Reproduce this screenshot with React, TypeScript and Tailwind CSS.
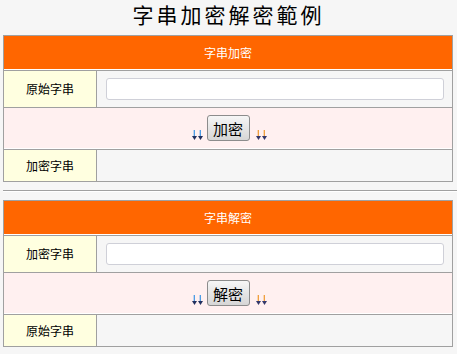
import React, { useState } from 'react';

const font = { fontFamily: '"Noto Sans CJK TC", "Noto Sans", sans-serif' };

function Arrows({ stem, head }: { stem: string; head: string }) {
  return (
    <svg width="11" height="10" viewBox="0 0 11 10" className="block">
      {[0, 6].map((x) => (
        <g key={x}>
          <rect x={x + 2} y={0} width={1} height={7} fill={stem} />
          <rect x={x + 1} y={0} width={1} height={6} fill={stem} opacity={0.35} />
          <polygon points={`${x},6 ${x + 5},6 ${x + 2.5},10`} fill={head} />
        </g>
      ))}
    </svg>
  );
}

function CipherTable({
  title,
  inLabel,
  outLabel,
  action,
  value,
  setValue,
  result,
  onRun,
}: {
  title: string;
  inLabel: string;
  outLabel: string;
  action: string;
  value: string;
  setValue: (v: string) => void;
  result: string;
  onRun: () => void;
}) {
  return (
    <div className="ml-[3px] w-[450px] border border-[#a0a0a0] bg-[#f6f6f6]">
      <div className="h-[34px] bg-[#ff6600] border-b border-white flex items-center justify-center text-white text-[12px]">
        {title}
      </div>

      <div className="flex h-[37px] border-t border-[#a0a0a0]">
        <div className="w-[93px] bg-[#ffffe0] border-r border-[#a0a0a0] flex items-center justify-center text-[12px] text-black">
          {inLabel}
        </div>
        <div className="flex-1 flex items-center pl-[9px] pr-[8px]">
          <input
            type="text"
            value={value}
            onChange={(e) => setValue(e.target.value)}
            className="w-full h-[22px] bg-white border border-[#cfd0d8] rounded-[3px] px-1 text-[12px] outline-none"
          />
        </div>
      </div>

      <div className="h-[42px] border-t border-[#a0a0a0] bg-[#fff0f0] border-b border-b-white flex items-start justify-center pt-[7px] pl-[2px]">
        <div className="flex items-end">
          <div className="mb-[1px] mr-[4px]">
            <Arrows stem="#4d9de6" head="#22305e" />
          </div>
          <button
            type="button"
            onClick={onRun}
            className="h-[26px] w-[43px] rounded-[3px] border border-[#8c8c8c] bg-gradient-to-b from-[#f6f6f6] to-[#d6d6d6] text-[15px] leading-none text-black flex items-center justify-center"
          >
            {action}
          </button>
          <div className="mb-[1px] ml-[6px]">
            <Arrows stem="#f0a040" head="#34386a" />
          </div>
        </div>
      </div>

      <div className="flex h-[32px] border-t border-[#a0a0a0]">
        <div className="w-[93px] bg-[#ffffe0] border-r border-[#a0a0a0] flex items-center justify-center text-[12px] text-black">
          {outLabel}
        </div>
        <div className="flex-1 flex items-center px-2 text-[12px] break-all">{result}</div>
      </div>
    </div>
  );
}

export default function App() {
  const [plain, setPlain] = useState('');
  const [encoded, setEncoded] = useState('');
  const [cipher, setCipher] = useState('');
  const [decoded, setDecoded] = useState('');

  return (
    <div className="w-[457px] h-[354px] bg-[#f6f6f6] overflow-hidden" style={font}>
      <div className="h-[35px] flex justify-center">
        <h1 className="text-[21px] leading-[28px] tracking-[3px] text-black font-normal">字串加密解密範例</h1>
      </div>

      <CipherTable
        title="字串加密"
        inLabel="原始字串"
        outLabel="加密字串"
        action="加密"
        value={plain}
        setValue={setPlain}
        result={encoded}
        onRun={() => setEncoded(btoa(unescape(encodeURIComponent(plain))))}
      />

      <div className="ml-[3px] mt-[8px] mb-[8px] border-t border-[#a0a0a0] border-b border-b-white" />

      <CipherTable
        title="字串解密"
        inLabel="加密字串"
        outLabel="原始字串"
        action="解密"
        value={cipher}
        setValue={setCipher}
        result={decoded}
        onRun={() => {
          try {
            setDecoded(decodeURIComponent(escape(atob(cipher))));
          } catch {
            setDecoded('');
          }
        }}
      />
    </div>
  );
}
